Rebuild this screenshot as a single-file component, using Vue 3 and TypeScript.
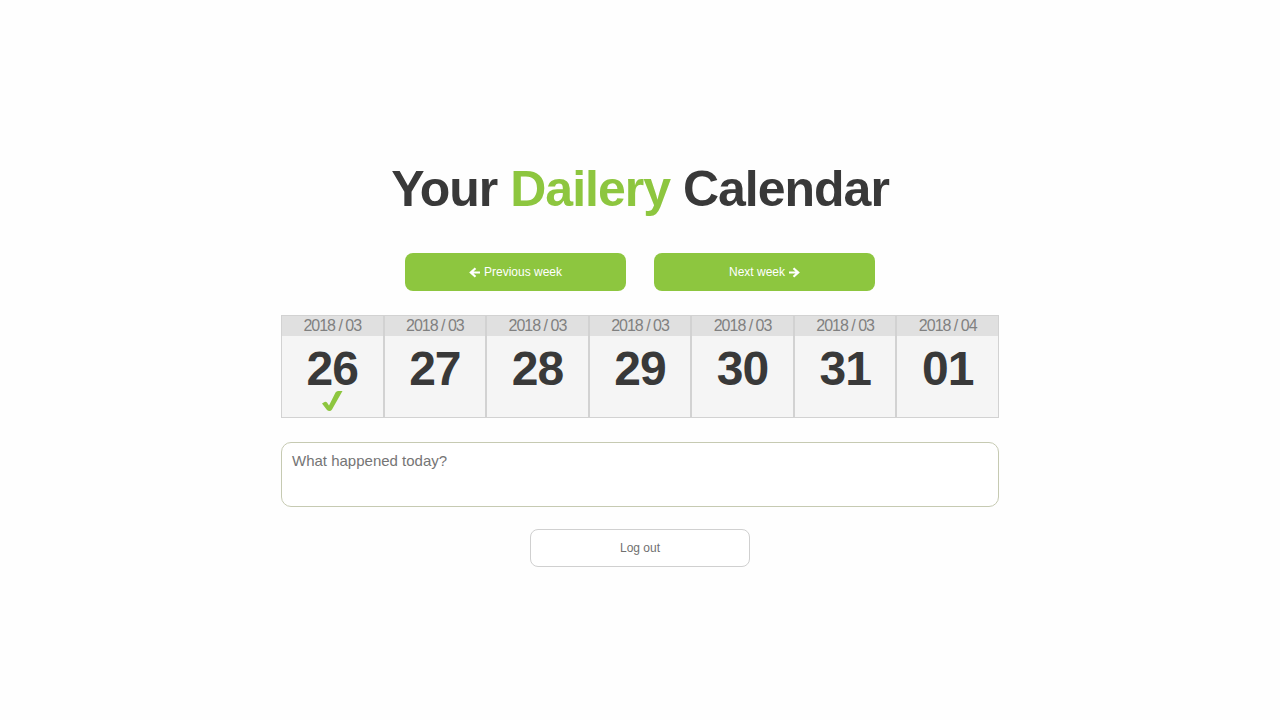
<script setup lang="ts">
import { ref } from 'vue'

interface Day {
  month: string
  day: string
  done?: boolean
}

const entry = ref('')
const days: Day[] = [
  { month: '2018 / 03', day: '26', done: true },
  { month: '2018 / 03', day: '27' },
  { month: '2018 / 03', day: '28' },
  { month: '2018 / 03', day: '29' },
  { month: '2018 / 03', day: '30' },
  { month: '2018 / 03', day: '31' },
  { month: '2018 / 04', day: '01' },
]
</script>

<template>
  <main class="page">
    <h1 class="title">Your <span class="brand">Dailery</span> Calendar</h1>
    <nav class="weeks">
      <button type="button" class="btn primary">
        <svg class="arrow" viewBox="0 0 11 11" aria-hidden="true">
          <path d="M11 5.500H2M6.500 1.200L1.800 5.500L6.500 9.800" />
        </svg>
        Previous week
      </button>
      <button type="button" class="btn primary">
        Next week
        <svg class="arrow" viewBox="0 0 11 11" aria-hidden="true">
          <path d="M0 5.500H9M4.500 1.200L9.200 5.500L4.500 9.800" />
        </svg>
      </button>
    </nav>
    <section class="calendar" aria-label="Week">
      <article v-for="d in days" :key="d.month + d.day" class="day">
        <div class="month">{{ d.month }}</div>
        <div class="number">{{ d.day }}</div>
        <svg v-if="d.done" class="check" viewBox="0 0 22 22" role="img" aria-label="Written">
          <path d="M1 13.500L3.500 12Q5 11.500 6 12.500L8 15.500L14.500 2.500Q15.500 1 17 1H21.500L11 19.500Q10 21 8.500 21Q7 21 6 20Z" />
        </svg>
      </article>
    </section>
    <textarea v-model="entry" class="entry" aria-label="What happened today?" placeholder="What happened today?"></textarea>
    <button type="button" class="btn logout">Log out</button>
  </main>
</template>

<style>
body {
  margin: 0;
  background: #fefefe;
}
</style>

<style scoped>
.page {
  box-sizing: border-box;
  min-height: 100vh;
  padding: 20px 16px 16px;
  display: flex;
  flex-direction: column;
  align-items: center;
  justify-content: center;
  font-family: "Liberation Sans", Arial, sans-serif;
  color: #393939;
}
.title {
  margin: 0 0 32px;
  font-size: 50px;
  line-height: 64px;
  letter-spacing: -1px;
}
.brand {
  color: #8dc63f;
}
.weeks {
  display: flex;
  gap: 28px;
  margin-bottom: 24px;
}
.btn {
  box-sizing: border-box;
  width: 221px;
  height: 38px;
  padding: 0;
  border: 0;
  border-radius: 8px;
  display: flex;
  align-items: center;
  justify-content: center;
  gap: 4px;
  font-family: inherit;
  font-size: 12px;
  line-height: 16px;
  cursor: pointer;
}
.primary {
  background: #8dc63f;
  color: #fff;
}
.arrow {
  width: 11px;
  height: 11px;
  fill: none;
  stroke: currentColor;
  stroke-width: 2.2;
}
.calendar {
  box-sizing: border-box;
  width: 100%;
  max-width: 718px;
  display: grid;
  grid-template-columns: repeat(7, 1fr);
  margin-bottom: 24px;
}
.day {
  box-sizing: border-box;
  height: 103px;
  border: 1px solid #d2d2d2;
  background: #f5f5f5;
  text-align: center;
}
.month {
  height: 20px;
  background: #e0e0e0;
  color: #808080;
  font-size: 16px;
  line-height: 20px;
  letter-spacing: -1px;
}
.number {
  font-size: 48px;
  font-weight: bold;
  line-height: 55px;
  padding-top: 5px;
  letter-spacing: -1px;
}
.check {
  display: block;
  width: 22px;
  height: 22px;
  margin: -6px auto 0;
  fill: #8dc63f;
}
.entry {
  box-sizing: border-box;
  width: 100%;
  max-width: 718px;
  height: 65px;
  margin: 0 0 22px;
  padding: 9px 10px;
  border: 1px solid #c6cab2;
  border-radius: 10px;
  background: #fff;
  font-family: inherit;
  font-size: 15px;
  line-height: 18px;
  color: #393939;
  resize: none;
}
.entry::placeholder {
  color: #757575;
}
.logout {
  width: 220px;
  border: 1px solid #d0d0d0;
  background: #fff;
  color: #707070;
}
</style>
